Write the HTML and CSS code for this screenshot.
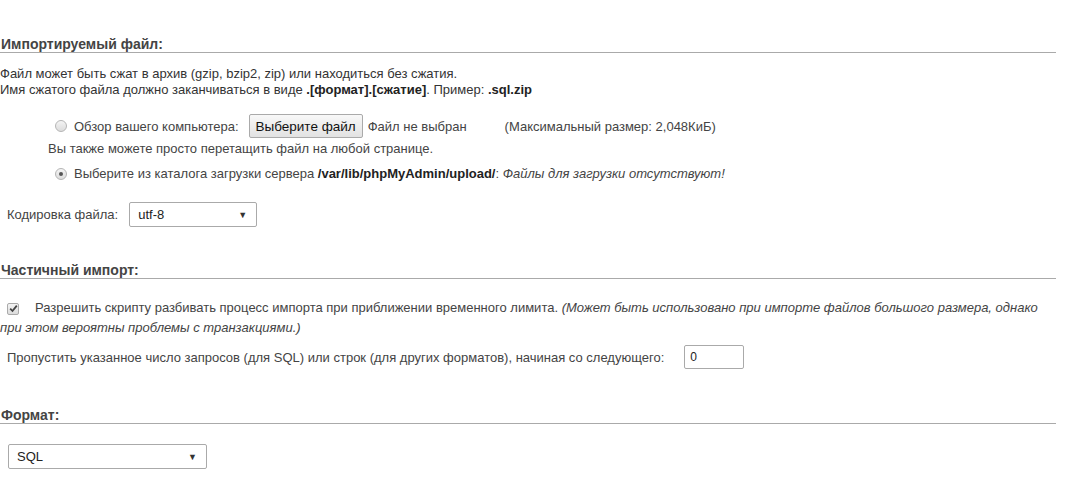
FILE: index.html
```html
<!DOCTYPE html>
<html lang="ru">
<head>
<meta charset="utf-8">
<link rel="stylesheet" href="styles.css">
</head>
<body>
<div class="page">
  <section class="sect sect-file">
    <h3 class="head">Импортируемый файл:</h3>
    <p class="intro">Файл может быть сжат в архив (gzip, bzip2, zip) или находиться без сжатия.<br>Имя сжатого файла должно заканчиваться в виде <b>.[формат].[сжатие]</b>. Пример: <b>.sql.zip</b></p>
    <div class="opts">
      <div class="row row-browse">
        <span class="radio"></span>
        <span class="lbl">Обзор вашего компьютера:</span>
        <span class="btn">Выберите файл</span>
        <span class="nofile">Файл не выбран</span>
        <span class="maxsize">(Максимальный размер: 2,048КиБ)</span>
      </div>
      <div class="drag">Вы также можете просто перетащить файл на любой странице.</div>
      <div class="row row-server">
        <span class="radio checked"></span>
        <span class="lbl">Выберите из каталога загрузки сервера <b>/var/lib/phpMyAdmin/upload/</b>: <i>Файлы для загрузки отсутствуют!</i></span>
      </div>
    </div>
    <div class="row row-charset">
      <span class="lbl">Кодировка файла:</span>
      <span class="select sel-charset"><span>utf-8</span><span class="arrow">▼</span></span>
    </div>
  </section>

  <section class="sect sect-partial">
    <h3 class="head">Частичный импорт:</h3>
    <p class="allow"><span class="check"><svg width="9" height="9" viewBox="0 0 9 9"><path d="M1.2 4.6 L3.5 7 L7.8 1.6" fill="none" stroke="#444" stroke-width="1.8"/></svg></span>Разрешить скрипту разбивать процесс импорта при приближении временного лимита. <i>(Может быть использовано при импорте файлов большого размера, однако при этом вероятны проблемы с транзакциями.)</i></p>
    <div class="row row-skip">
      <span class="lbl">Пропустить указанное число запросов (для SQL) или строк (для других форматов), начиная со следующего:</span>
      <span class="input">0</span>
    </div>
  </section>

  <section class="sect sect-format">
    <h3 class="head">Формат:</h3>
    <div class="row row-format">
      <span class="select sel-format"><span>SQL</span><span class="arrow">▼</span></span>
    </div>
  </section>
</div>
</body>
</html>
```
FILE: styles.css
```css
* { box-sizing: border-box; }
html, body { margin: 0; padding: 0; background: #fff; }
body {
  font-family: "Liberation Sans", Arial, sans-serif;
  font-size: 13px;
  color: #444;
}
.page { width: 1056px; padding-top: 36px; }
.head {
  margin: 0;
  font-size: 14px;
  font-weight: bold;
  color: #444;
  line-height: 16px;
  padding-left: 1px;
  border-bottom: 1px solid #aaa;
}
.intro { margin: 13px 0 0 0; line-height: 16px; color: #333; }
.intro b { color: #222; }
.opts { margin-top: 15px; padding-left: 48px; }
.row { display: flex; align-items: center; }
.row-browse { height: 26px; padding-left: 7px; }
.radio {
  width: 12px; height: 12px; border-radius: 50%;
  border: 1px solid #b5b5b5;
  background: linear-gradient(#f4f4f4, #dcdcdc);
  margin-right: 7px; flex: none;
}
.radio.checked { position: relative; }
.radio.checked::after {
  content: ""; position: absolute; left: 3px; top: 3px;
  width: 4px; height: 4px; border-radius: 50%; background: #555;
}
.btn {
  margin-left: 10px;
  height: 24px; padding: 0 6px;
  border: 1px solid #aaa; border-radius: 2px;
  background: linear-gradient(#f8f8f8, #e2e2e2);
  display: flex; align-items: center;
  font-size: 13.5px; color: #111;
}
.nofile { margin-left: 5px; }
.maxsize { margin-left: 38px; }
.drag { margin-top: 2px; line-height: 15px; }
.row-server { margin-top: 10px; padding-left: 7px; height: 15px; }
.row-server b { color: #222; }
.row-charset { margin-top: 21px; padding-left: 7px; height: 25px; }
.select {
  display: flex; align-items: center; justify-content: space-between;
  border: 1px solid #aaa; border-radius: 2px;
  height: 25px; padding: 0 9px 0 8px;
  color: #222; font-size: 13px; background: #fff;
}
.arrow { font-size: 9px; color: #333; }
.sel-charset { width: 128px; margin-left: 11px; }
.sect-partial { margin-top: 35px; }
.allow { margin: 19px 0 0 0; line-height: 20px; }
.check {
  display: inline-flex; align-items: center; justify-content: center;
  width: 12px; height: 12px;
  border: 1px solid #aaa; border-radius: 2px;
  background: linear-gradient(#f4f4f4, #dcdcdc);
  margin-left: 7px; margin-right: 16px; vertical-align: -1px;
}
.row-skip { margin-top: 7px; padding-left: 7px; height: 24px; }
.input {
  margin-left: 20px; width: 60px; height: 24px;
  border: 1px solid #aaa; border-radius: 2px;
  display: flex; align-items: center; padding-left: 5px;
  color: #222; font-size: 12px;
}
.sect-format { margin-top: 38px; }
.row-format { margin-top: 20px; padding-left: 8px; }
.sel-format { width: 199px; }
```
